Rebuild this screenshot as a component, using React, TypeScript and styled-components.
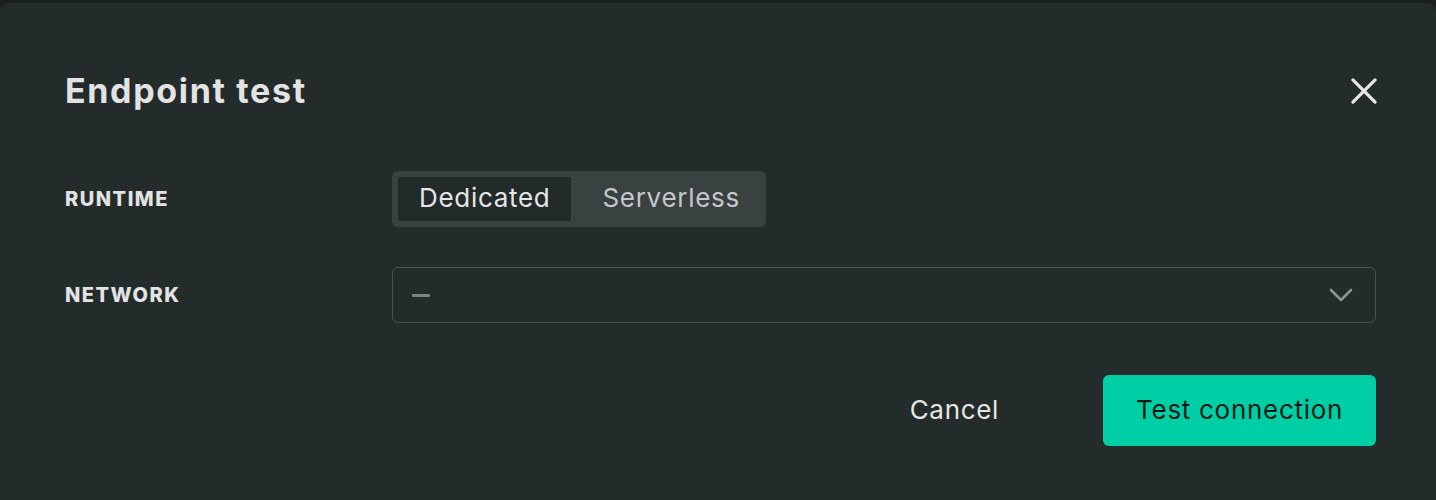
import React from "react";
import styled, { createGlobalStyle } from "styled-components";

const Global = createGlobalStyle`
  html, body { margin: 0; padding: 0; background: #1a1f1f; }
  body { font-family: Inter, "Noto Sans", sans-serif; -webkit-font-smoothing: antialiased; }
  * { box-sizing: border-box; }
`;

const Modal = styled.div`
  margin-top: 3px;
  height: 497px;
  background: #242b2b;
  border-radius: 8px 8px 0 0;
  padding: 0 60px 0 65px;
  display: flex;
  flex-direction: column;
`;

const Header = styled.div`
  display: flex;
  align-items: center;
  justify-content: space-between;
  padding-top: 60px;
  height: 116px;
`;

const Title = styled.h2`
  margin: 0;
  font-size: 34px;
  font-weight: 700;
  letter-spacing: 1.65px;
  color: #e3e3e3;
  line-height: 56px;
`;

const CloseButton = styled.button`
  border: none;
  background: transparent;
  padding: 0;
  width: 32px;
  height: 32px;
  margin-right: -4px;
  display: flex;
  align-items: center;
  justify-content: center;
  color: #e6e6e6;
  cursor: pointer;
`;

const Form = styled.div`
  margin-top: 52px;
  display: flex;
  flex-direction: column;
  gap: 40px;
`;

const Row = styled.div`
  display: grid;
  grid-template-columns: 327px 1fr;
  align-items: center;
  height: 56px;
`;

const Label = styled.div`
  font-size: 20px;
  font-weight: 800;
  color: #e3e3e3;
  letter-spacing: 1.5px;
`;

const Segmented = styled.div`
  display: inline-flex;
  justify-self: start;
  background: #394141;
  border-radius: 6px;
  padding: 6px;
  height: 56px;
`;

const Segment = styled.button<{ $active?: boolean }>`
  border: none;
  font-family: inherit;
  font-size: 26px;
  font-weight: 400;
  letter-spacing: 0.7px;
  height: 44px;
  padding: 0 ${(p) => (p.$active ? "21px 3px 21px" : "20px 3px 31px")};
  border-radius: 2px;
  background: ${(p) => (p.$active ? "#232a2a" : "transparent")};
  color: ${(p) => (p.$active ? "#e6e6e6" : "#c4c8c8")};
  cursor: pointer;
`;

const Select = styled.div`
  height: 56px;
  border: 1.5px solid #4a5252;
  border-radius: 6px;
  display: flex;
  align-items: center;
  justify-content: space-between;
  padding: 0 22px 0 19px;
`;

const Dash = styled.span`
  width: 18px;
  height: 3px;
  border-radius: 1px;
  background: #7d8282;
`;

const Footer = styled.div`
  margin-top: 52px;
  display: flex;
  justify-content: flex-end;
  align-items: center;
  gap: 71px;
`;

const Button = styled.button<{ $primary?: boolean }>`
  border: none;
  font-family: inherit;
  font-size: 26px;
  font-weight: 400;
  letter-spacing: 0.7px;
  height: 71px;
  padding: 0 33px 2px;
  border-radius: 6px;
  background: ${(p) => (p.$primary ? "#00cfa6" : "transparent")};
  color: ${(p) => (p.$primary ? "#0d1a16" : "#e6e6e6")};
  cursor: pointer;
`;

export default function App() {
  return (
    <>
      <Global />
      <Modal>
        <Header>
          <Title>Endpoint test</Title>
          <CloseButton aria-label="Close">
            <svg width="28" height="28" viewBox="0 0 24 24" fill="none" stroke="currentColor" strokeWidth="2.8" strokeLinecap="round">
              <path d="M2.5 2.5 L21.5 21.5 M21.5 2.5 L2.5 21.5" />
            </svg>
          </CloseButton>
        </Header>
        <Form>
          <Row>
            <Label>RUNTIME</Label>
            <Segmented>
              <Segment $active>Dedicated</Segment>
              <Segment>Serverless</Segment>
            </Segmented>
          </Row>
          <Row>
            <Label>NETWORK</Label>
            <Select>
              <Dash />
              <svg width="24" height="14" viewBox="0 0 24 14" fill="none" stroke="#8a9494" strokeWidth="2.6" strokeLinecap="round" strokeLinejoin="round">
                <path d="M2 2 L12 12 L22 2" />
              </svg>
            </Select>
          </Row>
        </Form>
        <Footer>
          <Button>Cancel</Button>
          <Button $primary>Test connection</Button>
        </Footer>
      </Modal>
    </>
  );
}
